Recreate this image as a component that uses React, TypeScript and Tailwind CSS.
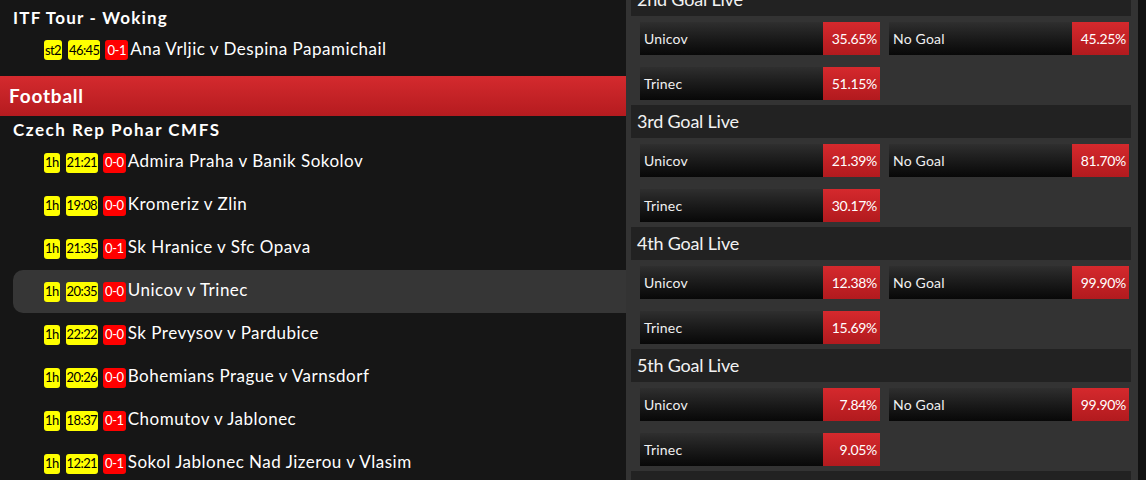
import React from "react";

type Match = { p: string; t: string; s: string; name: string; hl?: boolean };

const czech: Match[] = [
  { p: "1h", t: "21:21", s: "0-0", name: "Admira Praha v Banik Sokolov" },
  { p: "1h", t: "19:08", s: "0-0", name: "Kromeriz v Zlin" },
  { p: "1h", t: "21:35", s: "0-1", name: "Sk Hranice v Sfc Opava" },
  { p: "1h", t: "20:35", s: "0-0", name: "Unicov v Trinec", hl: true },
  { p: "1h", t: "22:22", s: "0-0", name: "Sk Prevysov v Pardubice" },
  { p: "1h", t: "20:26", s: "0-0", name: "Bohemians Prague v Varnsdorf" },
  { p: "1h", t: "18:37", s: "0-1", name: "Chomutov v Jablonec" },
  { p: "1h", t: "12:21", s: "0-1", name: "Sokol Jablonec Nad Jizerou v Vlasim" },
];

type Sec = { title: string; a: string; b: string; c: string };
const sections: Sec[] = [
  { title: "2nd Goal Live", a: "35.65%", b: "45.25%", c: "51.15%" },
  { title: "3rd Goal Live", a: "21.39%", b: "81.70%", c: "30.17%" },
  { title: "4th Goal Live", a: "12.38%", b: "99.90%", c: "15.69%" },
  { title: "5th Goal Live", a: "7.84%", b: "99.90%", c: "9.05%" },
  { title: "6th Goal Live", a: "5.10%", b: "99.90%", c: "6.20%" },
];

function Badges({ m }: { m: Match }) {
  return (
    <div className="flex items-center">
      <span className="mr-[6px] flex h-[20px] items-center rounded-[3px] bg-[#ffff00] px-[1px] text-[13px] leading-none tracking-[-0.6px] text-black">
        {m.p}
      </span>
      <span className="mr-[5px] flex h-[20px] items-center rounded-[3px] bg-[#ffff00] px-[1px] text-[13px] leading-none tracking-[-0.6px] text-black">
        {m.t}
      </span>
      <span className="mr-[2px] flex h-[20px] items-center rounded-[3px] bg-[#ff0000] px-[2px] text-[13px] leading-none tracking-[-0.4px] text-white">
        {m.s}
      </span>
      <span className="pb-[4px] text-[17px] leading-none tracking-[0.5px] text-white">{m.name}</span>
    </div>
  );
}

function Odd({ label, pct }: { label: string; pct: string }) {
  return (
    <div className="flex h-[33px] w-[240px]">
      <div className="flex flex-1 items-center bg-gradient-to-b from-[#2f2f2f] to-[#080808] pl-[4px] text-[14px] tracking-[0.2px] text-[#f0f0f0]">
        {label}
      </div>
      <div className="flex w-[57px] items-center justify-end bg-gradient-to-b from-[#d5292d] to-[#b21a1e] pr-[3px] text-[14px] tracking-[-0.3px] text-white">
        {pct}
      </div>
    </div>
  );
}

export default function App() {
  return (
    <div
      className="flex h-[480px] w-[1146px] overflow-hidden bg-[#161616]"
      style={{ fontFamily: "Lato, 'Open Sans', sans-serif" }}
    >
      {/* Left list */}
      <div className="w-[626px] shrink-0 bg-[#161616]">
        <div className="flex h-[35px] items-center pl-[13px] text-[17px] font-bold tracking-[1.2px] text-white">
          ITF Tour - Woking
        </div>
        <div className="flex h-[30px] items-center pl-[44px]">
          <Badges m={{ p: "st2", t: "46:45", s: "0-1", name: "Ana Vrljic v Despina Papamichail" }} />
        </div>
        <div className="mt-[11px] flex h-[40px] items-center bg-gradient-to-b from-[#d42a2e] to-[#b51b1f] pl-[9px] text-[19px] font-bold tracking-[0.8px] text-white">
          Football
        </div>
        <div className="flex h-[25px] items-center pl-[13px] pt-[3px] text-[17px] font-bold tracking-[1.5px] text-white">
          Czech Rep Pohar CMFS
        </div>
        {czech.map((m, i) =>
          m.hl ? (
            <div key={i} className="ml-[13px] flex h-[43px] items-center rounded-l-[10px] bg-[#363636] pl-[31px]">
              <Badges m={m} />
            </div>
          ) : (
            <div key={i} className="flex h-[43px] items-center pl-[44px]">
              <Badges m={m} />
            </div>
          )
        )}
      </div>

      {/* Right markets */}
      <div className="h-full w-[512px] shrink-0 overflow-hidden bg-[#333333] pl-[5px] pr-[7px]">
        <div className="mt-[-17px]">
          {sections.map((s, i) => (
            <div key={i} className="pb-[5px]">
              <div className="flex h-[33px] items-center bg-[#222222] pl-[6px] text-[18px] tracking-[-0.2px] text-[#f2f2f2]">
                {s.title}
              </div>
              <div className="mt-[6px] grid grid-cols-[240px_240px] gap-x-[9px] gap-y-[12px] pl-[9px]">
                <Odd label="Unicov" pct={s.a} />
                <Odd label="No Goal" pct={s.b} />
                <Odd label="Trinec" pct={s.c} />
              </div>
            </div>
          ))}
        </div>
      </div>

      {/* scrollbar strip */}
      <div className="h-full w-[8px] shrink-0 bg-[#121212]" />
    </div>
  );
}
